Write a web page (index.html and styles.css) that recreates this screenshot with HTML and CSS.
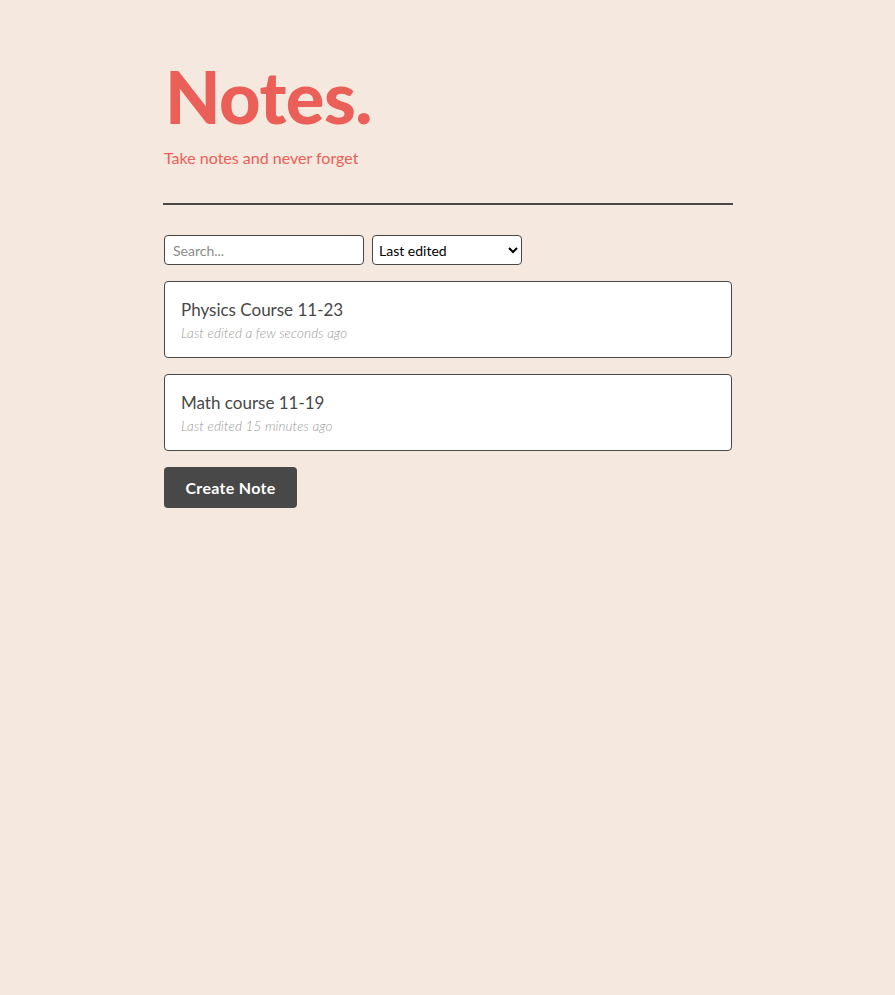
FILE: index.html
```html
<!DOCTYPE html>
<html>
<head>
<meta charset="utf-8">
<link rel="stylesheet" href="styles.css">
</head>
<body>
<div class="page">
  <header class="header">
    <h1 class="title">Notes.</h1>
    <p class="subtitle">Take notes and never forget</p>
  </header>
  <div class="rule"></div>
  <div class="filters">
    <input class="search" type="text" placeholder="Search...">
    <select class="sort">
      <option>Last edited</option>
      <option>Recently created</option>
      <option>Alphabetical</option>
    </select>
  </div>
  <div class="notes">
    <a class="note">
      <p class="note-title">Physics Course 11-23</p>
      <p class="note-meta">Last edited a few seconds ago</p>
    </a>
    <a class="note">
      <p class="note-title">Math course 11-19</p>
      <p class="note-meta">Last edited 15 minutes ago</p>
    </a>
  </div>
  <button class="create">Create Note</button>
</div>
</body>
</html>
```
FILE: styles.css
```css
* { box-sizing: border-box; }
html, body {
  margin: 0;
  padding: 0;
  background: #f5e8de;
}
body {
  font-family: Lato, "Noto Sans", sans-serif;
  color: #484848;
}
.page {
  width: 568px;
  margin: 0 auto;
  padding-top: 54px;
  position: relative;
  left: 0.5px;
}
.title {
  margin: 0;
  font-size: 72px;
  font-weight: 900;
  color: #ea5f57;
  line-height: 84px;
  letter-spacing: -0.5px;
  padding-left: 1px;
}
.subtitle {
  margin: 10px 0 0;
  font-size: 16px;
  color: #ea5f57;
  line-height: 20px;
}
.rule {
  height: 2px;
  background: #484848;
  margin: 35px -1px 30px;
}
.filters {
  display: flex;
  gap: 8px;
  margin-bottom: 16px;
}
.search, .sort {
  height: 30px;
  border: 1px solid #484848;
  border-radius: 4px;
  background: #fff;
  font-family: Lato, "Noto Sans", sans-serif;
  font-size: 14px;
}
.search {
  width: 200px;
  padding: 0 8px;
  color: #484848;
}
.search::placeholder { color: #8a8a8a; }
.sort {
  width: 150px;
  padding: 0 2px;
  color: #000;
}
.notes {
  display: flex;
  flex-direction: column;
  gap: 16px;
  margin-bottom: 16px;
}
.note {
  display: block;
  height: 77px;
  background: #fff;
  border: 1px solid #484848;
  border-radius: 4px;
  padding: 16px 16px;
}
.note-title {
  margin: 0;
  font-size: 17px;
  line-height: 24px;
  color: #484848;
}
.note-meta {
  margin: 3px 0 0;
  font-size: 13.5px;
  font-style: italic;
  font-weight: 300;
  color: #999999;
  letter-spacing: 0.1px;
  line-height: 16px;
}
.create {
  display: block;
  width: 133px;
  height: 41px;
  background: #484848;
  color: #fff;
  border: none;
  border-radius: 4px;
  font-family: Lato, "Noto Sans", sans-serif;
  font-size: 16px;
  font-weight: 700;
  letter-spacing: 0.3px;
}
```
